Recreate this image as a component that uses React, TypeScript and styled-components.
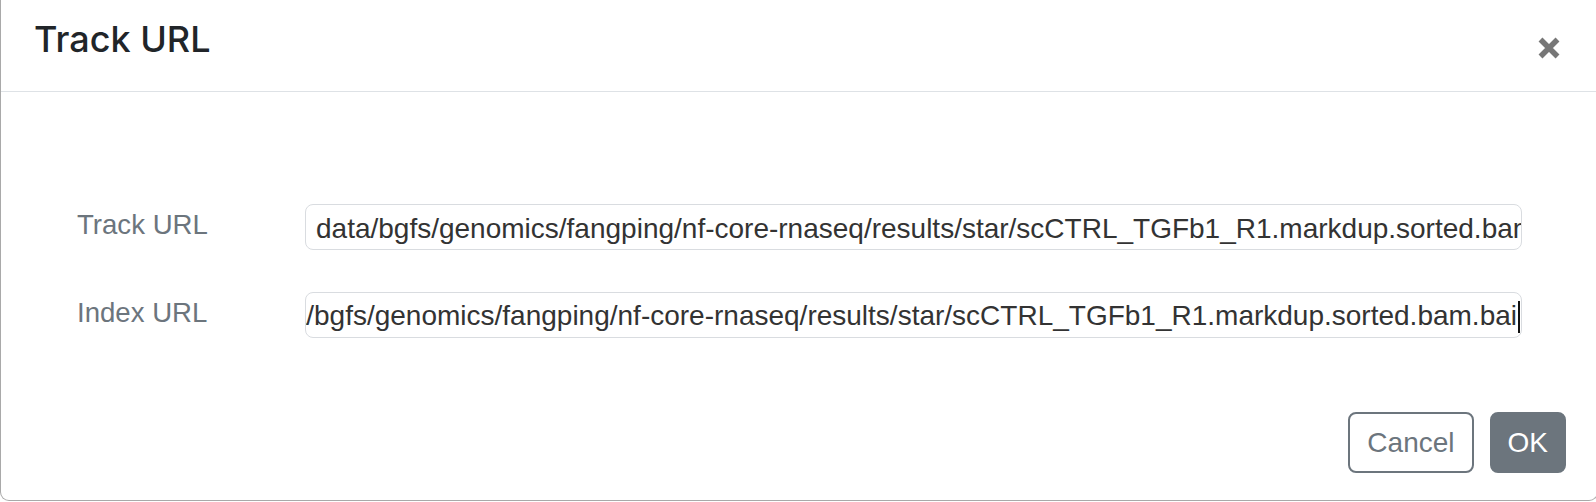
import React from "react";
import styled, { createGlobalStyle } from "styled-components";

const Global = createGlobalStyle`
  html, body { margin: 0; padding: 0; background: #ffffff; overflow: hidden; }
  #root { width: 1596px; height: 502px; overflow: hidden; }
`;

const Modal = styled.div`
  box-sizing: border-box;
  width: 1598px;
  height: 501px;
  background: #ffffff;
  border: 1px solid #a9a9a9;
  border-top: none;
  border-radius: 0 0 9px 9px;
  display: flex;
  flex-direction: column;
`;

const Header = styled.div`
  box-sizing: border-box;
  height: 92px;
  flex: none;
  display: flex;
  align-items: center;
  justify-content: space-between;
  padding: 0 36px 0 33px;
  border-bottom: 1px solid #dee2e6;
`;

const Title = styled.h5`
  margin: 0 0 12px 0;
  font-family: Inter, "Liberation Sans", sans-serif;
  font-size: 36px;
  font-weight: 500;
  line-height: 1.2;
  color: #212529;
`;

const Close = styled.button`
  border: none;
  background: none;
  padding: 0;
  width: 24px;
  height: 24px;
  margin-top: 4px;
  display: flex;
  cursor: pointer;
`;

const Body = styled.div`
  flex: none;
  display: grid;
  grid-template-columns: 228px 1fr;
  row-gap: 42px;
  align-items: center;
  padding: 112px 75px 0 76px;
`;

const Label = styled.label`
  font-family: "Liberation Sans", Arial, sans-serif;
  font-size: 27.6px;
  color: #6c757d;
  margin-top: -4px;
`;

const Field = styled.div<{ $end?: boolean }>`
  box-sizing: border-box;
  height: 46px;
  border: 1px solid #d9dce0;
  border-radius: 8px;
  padding: 3px ${(p) => (p.$end ? "1px" : "3px")} 0 10px;
  display: flex;
  align-items: center;
  justify-content: ${(p) => (p.$end ? "flex-end" : "flex-start")};
  overflow: hidden;
  white-space: nowrap;
  font-family: "Liberation Sans", Arial, sans-serif;
  font-size: 28px;
  color: #333333;
`;

const Clip = styled.span`
  flex: none;
`;

const Caret = styled.span`
  display: inline-block;
  width: 2px;
  height: 32px;
  background: #111;
  vertical-align: middle;
  margin-left: 1px;
`;

const Footer = styled.div`
  flex: none;
  display: flex;
  justify-content: flex-end;
  gap: 16px;
  padding: 74px 31px 0 0;
`;

const Btn = styled.button<{ $primary?: boolean }>`
  box-sizing: border-box;
  height: 61px;
  padding: 0 ${(p) => (p.$primary ? "16px" : "17px")};
  border-radius: 8px;
  font-family: "Liberation Sans", Arial, sans-serif;
  font-size: 28px;
  border: 2px solid #6c757d;
  background: ${(p) => (p.$primary ? "#6c757d" : "#ffffff")};
  color: ${(p) => (p.$primary ? "#ffffff" : "#6c757d")};
  cursor: pointer;
`;

const trackUrl =
  "data/bgfs/genomics/fangping/nf-core-rnaseq/results/star/scCTRL_TGFb1_R1.markdup.sorted.bam";
const indexUrl =
  "/data/bgfs/genomics/fangping/nf-core-rnaseq/results/star/scCTRL_TGFb1_R1.markdup.sorted.bam.bai";

export default function App() {
  return (
    <>
      <Global />
      <Modal>
        <Header>
          <Title>Track URL</Title>
          <Close aria-label="Close">
            <svg width="24" height="24" viewBox="0 0 24 24">
              <path
                d="M3.5 3.5 L20.5 20.5 M20.5 3.5 L3.5 20.5"
                stroke="#777777"
                strokeWidth="5.5"
                strokeLinecap="butt"
              />
            </svg>
          </Close>
        </Header>
        <Body>
          <Label>Track URL</Label>
          <Field>
            <Clip>{trackUrl}</Clip>
          </Field>
          <Label>Index URL</Label>
          <Field $end>
            <Clip>
              {indexUrl}
              <Caret />
            </Clip>
          </Field>
        </Body>
        <Footer>
          <Btn>Cancel</Btn>
          <Btn $primary>OK</Btn>
        </Footer>
      </Modal>
    </>
  );
}
